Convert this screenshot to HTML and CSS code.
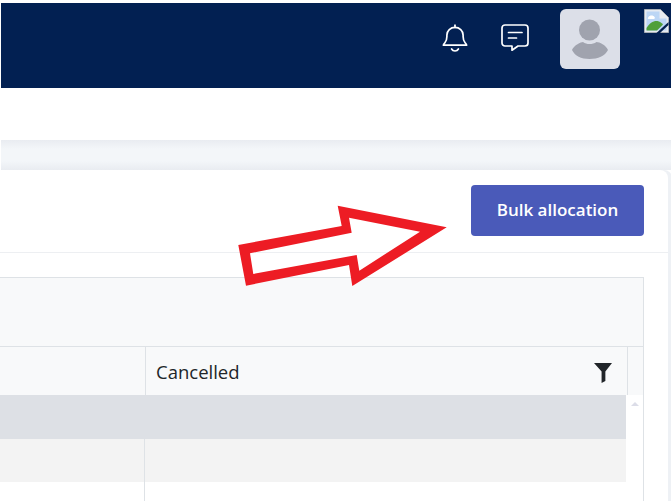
FILE: index.html
```html
<!DOCTYPE html>
<html lang="en">
<head>
<meta charset="utf-8">
<title>Bulk allocation</title>
<link rel="stylesheet" href="styles.css">
</head>
<body>
<div class="page">
  <header class="nav">
    <svg class="icon bell" viewBox="0 0 26 28" fill="none" stroke="#fff" stroke-width="1.7" stroke-linecap="round" stroke-linejoin="round">
      <path d="M13 1.2v2.2"/>
      <path d="M1.400 21.200c0-1 .8-1.600 1.500-2.400 1.400-1.600 2-3.400 2-6.200V11c0-4.400 3.600-7.600 8.100-7.600S21.100 6.600 21.100 11v1.600c0 2.800.6 4.600 2 6.200.7.800 1.500 1.400 1.500 2.400H1.400z"/>
      <path d="M9.600 25c.7 1.300 2 2 3.400 2s2.700-.7 3.400-2"/>
    </svg>
    <svg class="icon comment" viewBox="0 0 28 27" fill="none" stroke="#fff" stroke-width="1.7" stroke-linecap="round" stroke-linejoin="round">
      <path d="M4 1h20a3 3 0 0 1 3 3v15a3 3 0 0 1-3 3h-7l-6 4.300V22H4a3 3 0 0 1-3-3V4a3 3 0 0 1 3-3z"/>
      <path d="M7.500 8.500h13.500M7.500 14h8"/>
    </svg>
    <div class="avatar">
      <svg viewBox="0 0 60 60">
        <circle cx="29.500" cy="21" r="10.500" fill="#a0a3ae"/>
        <path d="M12 41c2-5 9-8 11-8 2 1.500 4 2 6.500 2s5-.5 7-2c3 0 9.500 3 11.500 8-3 6-10 9-18.500 9S15 47 12 41z" fill="#a0a3ae"/>
      </svg>
    </div>
    <svg class="broken" viewBox="0 0 25 24">
      <path d="M.5.500h16l8 8v15H.5z" fill="#e6ebf2" stroke="#a9afb6"/>
      <path d="M2.500 2.500h13v7h7v12h-20z" fill="#bcd6f5"/>
      <path d="M4.500 8c1-2 5-2 6 0 1 1 0 2-1 2h-5c-1 0-1-1 0-2z" fill="#fff"/>
      <path d="M2.500 21.500V19c3-5 7-7.500 11-7 2 .3 4 2 5.500 3.500l-6 6z" fill="#4f9f3a"/>
      <path d="M12.500 24 24.500 13v3l-8.500 8z" fill="#03204f"/>
    </svg>
  </header>
  <div class="strip"></div>
  <div class="band"></div>
  <main class="card">
    <div class="card-head">
      <button class="bulk" type="button">Bulk allocation</button>
    </div>
    <div class="table">
      <div class="head-top"></div>
      <div class="head-row">
        <div class="col-a"></div>
        <div class="col-b">
          <span>Cancelled</span>
          <svg class="filter" viewBox="0 0 19 21"><path d="M0 0h19l-7 9v10l-4 2V9z" fill="#212529"/></svg>
        </div>
        <div class="col-end"></div>
      </div>
      <div class="body">
        <div class="rows">
          <div class="row row-selected"></div>
          <div class="row row-alt"><div class="cell-a"></div></div>
          <div class="row row-empty"><div class="cell-a"></div></div>
        </div>
        <div class="scroll"><div class="scroll-up"></div></div>
      </div>
    </div>
  </main>
</div>
<svg class="arrow" viewBox="0 0 671 501">
  <path fill-rule="evenodd" fill="#ed1c24" d="M446.700 227.300 337.700 205.700 341.700 226 238.300 245 246 285.700 349 265 352.300 286ZM420 231.700 349 217.700 351.700 232.700 250 253.300 253.300 274 356.700 255 359.300 270.700Z"/>
</svg>
</body>
</html>
```
FILE: styles.css
```css
* { box-sizing: border-box; }
html, body { margin: 0; height: 501px; overflow: hidden; background: #fff; }
body { font-family: "Open Sans", "Noto Sans", sans-serif; color: #212529; position: relative; }
.page { padding: 3px 0 0 1px; }
.nav { height: 85px; background: #022052; display: flex; align-items: flex-start; position: relative; padding-left: 441px; }
.icon { display: block; flex: none; }
.bell { width: 26px; height: 28px; margin-top: 21px; }
.comment { width: 28px; height: 27px; margin: 21px 0 0 33px; }
.avatar { width: 60px; height: 60px; margin: 6px 0 0 31px; background: #dcdfe8; border-radius: 6px; flex: none; }
.avatar svg { display: block; width: 60px; height: 60px; }
.broken { width: 25px; height: 24px; margin: 6px 0 0 24px; flex: none; }
.strip { height: 52px; background: #fff; }
.band { height: 30px; background: linear-gradient(#e9ecf1, #f3f6f9 30%, #f3f6f9 70%, #e9ecf1); }
.card { margin: 0 3px 0 -1px; background: #fff; border-top-right-radius: 8px; height: 331px; box-shadow: 4px 0 0 #eef1f5; }
.card-head { height: 83px; padding: 15px 24px 0 0; border-bottom: 1px solid #edeff2; display: flex; justify-content: flex-end; align-items: flex-start; }
.bulk { width: 173px; height: 51px; border: 0; border-radius: 4px; background: #4a5ab9; color: #fff; font: 600 17px "Open Sans", sans-serif; padding: 0 0 2px; }
.table { margin: 24px 24px 0 0; border: 1px solid #dee2e6; border-width: 1px 1px 0 0; }
.head-top { height: 69px; background: #f8f9fa; border-bottom: 1px solid #dee2e6; }
.head-row { display: flex; height: 48px; background: #f8f9fa; }
.col-a { width: 146px; border-right: 1px solid #dee2e6; }
.col-b { flex: 1; display: flex; align-items: center; justify-content: space-between; padding: 1px 15px 0 10px; font-size: 18.500px; border-right: 1px solid #dee2e6; }
.filter { width: 18px; height: 20px; display: block; margin-top: 2px; }
.col-end { width: 15px; }
.body { display: flex; height: 106px; }
.rows { flex: 1; }
.row { display: flex; }
.row-selected { height: 44px; background: #dde0e5; }
.row-alt { height: 43px; background: #f3f3f3; }
.row-empty { height: 19px; }
.cell-a { width: 145px; border-right: 1px solid #dee2e6; }
.scroll { width: 17px; padding-top: 7px; display: flex; justify-content: center; align-items: flex-start; }
.scroll-up { width: 0; height: 0; border: 4px solid transparent; border-top: 0; border-bottom: 4px solid #dcdde8; }
.arrow { position: absolute; left: 0; top: 0; width: 671px; height: 501px; pointer-events: none; }
```
